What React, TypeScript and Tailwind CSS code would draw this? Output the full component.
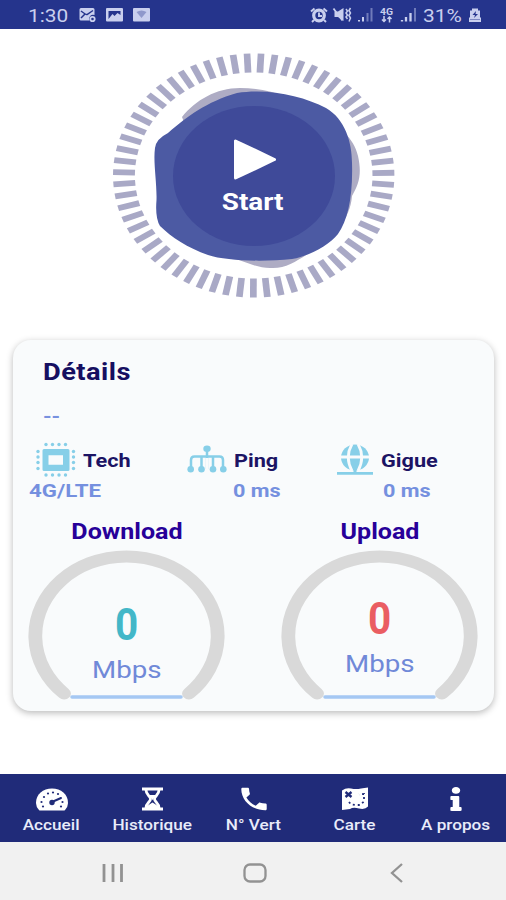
import clsx from "clsx";
import { FaInfo } from "react-icons/fa";
import { MdPhone } from "react-icons/md";

const TICKS = 63;

const StatusBar = () => (
  <div className="flex h-[29px] items-center justify-between bg-[#25348c] pl-7 pr-[25px] text-[#c9cfee]">
    <div className="flex items-center">
      <span className="w-[51px] pt-0.5 text-[18px] leading-none">
        <span className="inline-block origin-left scale-x-[1.16]">1:30</span>
      </span>
      <svg className="h-4 w-[72px]" viewBox="0 0 72 16">
        <path fill="currentColor" d="M2 1h12q1.500 0 1.500 1.500V8a4 4 0 0 0-5 5.500H2Q.5 13.500.5 12V2.500Q.5 1 2 1z" />
        <path d="M2 4q5 4 6 3.500l6-4M2 11l4-4" stroke="#25348c" strokeWidth="1.500" fill="none" />
        <circle cx="13.500" cy="12" r="2.200" stroke="currentColor" strokeWidth="1.800" fill="none" />
        <rect x="27" y="1" width="17" height="13.500" rx="1" fill="currentColor" />
        <path d="M29.500 12V4h12v4l-3-2-3 3-2-2z" fill="#25348c" />
        <rect x="54" y="1" width="17" height="13.500" rx="1" fill="currentColor" />
        <path d="M57.500 5q5-3 10 0l-5 6z" fill="#8f98cb" />
      </svg>
    </div>
    <div className="flex items-center">
      <svg className="h-4 w-[114px]" viewBox="0 0 114 16">
        <circle cx="10" cy="8.500" r="5.300" fill="none" stroke="currentColor" strokeWidth="3.200" />
        <path d="M10 5.500V9h3M2 4.500l3.500-3M18 4.500l-3.500-3M5 13l-2 2M15 13l2 2" fill="none" stroke="currentColor" strokeWidth="1.900" />
        <path d="M25.500 4.500h3.500l5.500-3.500v13l-5.500-4h-3.500z" fill="currentColor" />
        <path d="m24.500 1.500 9 12" stroke="currentColor" strokeWidth="1.800" />
        <path d="M37 2l1.500 2L37 6l1.500 2L37 10l1.500 2M41.500 1l-1.500 2.500L41.500 6 40 8.500l1.500 2.500-1.500 3.500" fill="none" stroke="currentColor" strokeWidth="1.500" />
        <path d="M50 13v1.500M54 10v4.500" stroke="currentColor" strokeWidth="2" />
        <path d="M58.500 6v8.500M62.500 1v13.500" stroke="#707bba" strokeWidth="2" />
        <text x="71" y="7.500" fontSize="8.500" fontWeight="700" fill="currentColor" textLength="13" lengthAdjust="spacingAndGlyphs">4G</text>
        <path d="M75 9v6M73 12.500l2 2 2-2M80.500 15.500v-6M78.500 12l2-2 2 2" fill="none" stroke="currentColor" strokeWidth="1.500" />
        <path d="M93 13v1.500M97 10v4.500M101.500 6v8.500" stroke="currentColor" strokeWidth="2.300" />
        <path d="M106 1v13.500" stroke="#707bba" strokeWidth="2" />
      </svg>
      <span className="w-[46px] pt-0.5 text-[18px] leading-none">
        <span className="inline-block origin-left scale-x-[1.160]">31%</span>
      </span>
      <svg className="h-4 w-3" viewBox="0 0 12 16">
        <path d="M3 1.500h6v2h2v7h1v4.500H0v-4.500h1v-7h2z" fill="currentColor" />
        <path d="M7 4 3.500 8H6l-1 3 4-4H6.500z" fill="#25348c" />
        <path d="M1 12.500h10" stroke="#7e88c2" />
      </svg>
    </div>
  </div>
);

const StartButton = () => (
  <button className="relative mx-auto block h-[252px] w-[290px]">
    <svg className="h-full w-full" viewBox="0 0 290 252">
      <g transform="translate(145.700 125.500) scale(1.153 1)">
        {Array.from({ length: TICKS }, (_, i) => (
          <rect
            key={i}
            x="-2.900"
            y="-122"
            width="5.800"
            height="19"
            fill="#a9a9c6"
            transform={`rotate(${3 + (i * 360) / TICKS})`}
          />
        ))}
      </g>
      <path
        d="M74 67C88 50 108 38 132 38C162 38 186 48 206 62C232 76 246 88 250 106C254 124 251 134 244 146C242 170 226 186 206 200C190 210 180 218 165 218C152 219 140 213 128 209Z"
        fill="#aeacc4"
      />
      <path
        d="M47 98Q48 89 60 83C80 66 98 52 129 43C160 38 195 46 218 58C237 69 244 92 244 113C245 146 240 170 230 184C221 195 202 206 184 209C155 212 118 211 100 205C80 198 63 187 52 176Q47 168 48.500 150C49 132 45 112 47 98Z"
        fill="#4c5aa3"
      />
      <ellipse cx="146" cy="126" rx="81" ry="70" fill="#3f4a99" />
      <path d="M127.500 91v37l39-18.500z" fill="#fff" stroke="#fff" strokeWidth="3" strokeLinejoin="round" />
    </svg>
    <span className="absolute inset-x-0 top-[138px] text-[24px] font-bold leading-7 text-white">
      <span className="inline-block scale-x-[1.16]">Start</span>
    </span>
  </button>
);

const ChipIcon = () => (
  <svg className="h-9 w-10" viewBox="0 0 40 36" fill="#87cfe8">
    <path fillRule="evenodd" d="M8 7h24q1.500 0 1.500 1.500v19q0 1.500-1.500 1.500H8q-1.500 0-1.500-1.500v-19Q6.500 7 8 7zm4.500 6.300v9.500h14.500v-9.500z" />
    {[10, 16.500, 23, 29.500].map((x) => (
      <g key={x}>
        <circle cx={x} cy="2.500" r="1.700" />
        <circle cx={x} cy="33" r="1.700" />
      </g>
    ))}
    {[9.500, 15, 20.500, 26.500].map((y) => (
      <g key={y}>
        <circle cx="2" cy={y} r="1.700" />
        <circle cx="37.500" cy={y} r="1.700" />
      </g>
    ))}
  </svg>
);

const TreeIcon = () => (
  <svg className="-mt-0.5 h-7 w-10" viewBox="0 0 40 28" fill="none" stroke="#87cfe8" strokeWidth="2.500">
    <path d="M20 3v21M4 24v-9q0-3.500 3.500-3.500h25q3.500 0 3.500 3.500v9M14.500 11.500v12M26 11.500v12" />
    <path d="M20 13v12" stroke="#f9fbfc" strokeWidth="3" />
    <g fill="#87cfe8" stroke="none">
      <ellipse cx="20" cy="3.800" rx="3.700" ry="3.200" />
      <circle cx="3.700" cy="24.300" r="3.300" />
      <circle cx="14.500" cy="24.300" r="3.300" />
      <circle cx="26" cy="24.300" r="3.300" />
      <circle cx="36.300" cy="24.300" r="3.300" />
    </g>
  </svg>
);

const GlobeIcon = () => (
  <svg className="h-8 w-9" viewBox="0 0 36 32" fill="#87cfe8">
    <ellipse cx="18" cy="13.500" rx="14" ry="13" />
    <path d="M3 13h30M15 0q-7.500 13 0 27M21 0q7.500 13 0 27" fill="none" stroke="#f9fbfc" strokeWidth="2.800" />
    <path d="M16.500 22h3v6h-3zM0 28h36v2.800H0z" />
  </svg>
);

const Gauge = ({ color, offset }: { color: string; offset: string }) => (
  <div className="relative h-[152px] w-[198px]">
    <svg className="h-full w-full" viewBox="0 0 198 152">
      <g transform="translate(98.500 86.500) scale(1.150 1)">
        <path d="M-54.300 57A79.300 79.300 0 1 1 54.300 57" fill="none" stroke="#d9d9d9" strokeWidth="12" strokeLinecap="round" />
      </g>
      <path d="M44 147h109" stroke="#a5c8f3" strokeWidth="3.500" strokeLinecap="round" />
    </svg>
    <div className={clsx("absolute inset-x-0 flex flex-col items-center", offset)}>
      <span className={clsx("scale-x-[0.92] text-[44px] font-bold leading-[52px]", color)}>0</span>
      <span className="mt-[3px] scale-x-[1.13] text-[24.500px] leading-8 text-[#7089d8]">Mbps</span>
    </div>
  </div>
);

const Label = ({ text }: { text: string }) => (
  <span className="inline-block origin-left scale-x-[1.13] pt-0.5 text-[19.200px] font-bold leading-6 text-[#1c1464]">
    {text}
  </span>
);

const Details = () => (
  <div className="ml-[13px] mr-3 mt-[38px] h-[371px] rounded-[18px] bg-[#f9fbfc] shadow-[0_2px_7px_rgba(0,0,0,0.28)]">
    <h2 className="pl-[30px] pt-[18px] text-[23.500px] font-bold leading-7 text-[#160f61]">
      <span className="inline-block origin-left scale-x-[1.16] tracking-[0.4px]">Détails</span>
    </h2>
    <div className="h-[54px] pl-[30px] pt-[21px] text-[19px] font-bold leading-5 text-[#7891df]">
      <span className="inline-block origin-left scale-x-[1.150]">--</span>
    </div>
    <div className="flex h-10 items-center pl-[23px]">
      <div className="flex w-[151px] items-center gap-[7px]">
        <ChipIcon />
        <Label text="Tech" />
      </div>
      <div className="flex w-[150px] items-center gap-[7px]">
        <TreeIcon />
        <Label text="Ping" />
      </div>
      <div className="flex items-center gap-2">
        <GlobeIcon />
        <Label text="Gigue" />
      </div>
    </div>
    <div className="flex h-6 text-[19px] font-bold leading-[22px] text-[#7590df]">
      <span className="w-[204px] pl-4">
        <span className="inline-block origin-left scale-x-[1.17]">4G/LTE</span>
      </span>
      <span className="w-[150px] pl-4">
        <span className="inline-block origin-left scale-x-[1.140]">0 ms</span>
      </span>
      <span className="pl-4">
        <span className="inline-block origin-left scale-x-[1.140]">0 ms</span>
      </span>
    </div>
    <div className="flex h-[46px] items-center justify-between px-[15px] pt-[9px] text-center text-[22px] font-bold text-[#270099]">
      <span className="w-[198px] scale-x-[1.14]">Download</span>
      <span className="w-[198px] scale-x-[1.14]">Upload</span>
    </div>
    <div className="flex justify-between px-[15px]">
      <Gauge color="text-[#43b7c8]" offset="top-[49px]" />
      <Gauge color="text-[#ea5d62]" offset="top-[43px]" />
    </div>
  </div>
);

const SpeedIcon = () => (
  <svg className="h-[23px] w-8" viewBox="0 0 32 23">
    <path d="M3 22Q0 19 0 15C0 6 7 .5 16 .5S32 6 32 15q0 4-3 7-.5.500-1 .500H4q-.5 0-1-.5z" fill="#fff" />
    <path d="m16 14 9-4" stroke="#202b79" strokeWidth="2" strokeLinecap="round" />
    <circle cx="16" cy="14.500" r="2.700" fill="#202b79" />
    <g fill="#202b79">
      <circle cx="5.500" cy="14" r="1.100" />
      <circle cx="7" cy="18.500" r="1.100" />
      <circle cx="8" cy="9" r="1.100" />
      <circle cx="12" cy="5.500" r="1.100" />
      <circle cx="17" cy="4.500" r="1.100" />
      <circle cx="22" cy="6" r="1.100" />
      <circle cx="26.500" cy="14" r="1.100" />
      <circle cx="25" cy="18.500" r="1.100" />
    </g>
  </svg>
);

const MapIcon = () => (
  <svg className="h-6 w-7" viewBox="0 0 28 24">
    <path d="M1 3.500q4-3 9-2t10 0l7-1v19q-3 3.500-9 2t-9 .5l-8 1z" fill="#fff" />
    <g fill="none" stroke="#202b79" strokeWidth="1.800">
      <path d="m4.500 5 6 5M10.500 5l-6 5" strokeWidth="2.300" />
      <path d="M8 15l2 2.500 4 .5h5l4-3.500V7l-5 .5" strokeDasharray="2 3" />
    </g>
  </svg>
);

const HourglassIcon = () => (
  <svg className="h-6 w-[21px]" viewBox="0 0 21 24" fill="none" stroke="#fff">
    <path d="M0 2h21M0 22h21" strokeWidth="3" />
    <path d="M4 3c0 5 4.500 6 4.500 9s-4.500 4-4.500 9M17 3c0 5-4.500 6-4.500 9s4.500 4 4.500 9" strokeWidth="2.800" />
    <path d="M7 8h7l-3.500 5zM5 19l5.500-3.500L16 19v3H5z" fill="#fff" stroke="none" />
  </svg>
);

const tabs = [
  { label: "Accueil", icon: <SpeedIcon /> },
  { label: "Historique", icon: <HourglassIcon /> },
  { label: "N° Vert", icon: <MdPhone className="h-[30px] w-[30px] scale-x-[1.13]" /> },
  { label: "Carte", icon: <MapIcon /> },
  { label: "A propos", icon: <FaInfo className="h-6 w-6 scale-x-[1.25]" /> },
];

const App = () => (
  <div className="flex h-[900px] w-[506px] flex-col overflow-hidden bg-white font-['Roboto',sans-serif]">
    <StatusBar />
    <main className="grow pt-[21px]">
      <StartButton />
      <Details />
    </main>
    <nav className="flex h-[68px] bg-[#202b79] pl-px text-white">
      {tabs.map((tab) => (
        <div key={tab.label} className="flex w-1/5 flex-col items-center pt-[9px]">
          <div className="flex h-8 items-center">{tab.icon}</div>
          <span className="scale-x-[1.130] whitespace-nowrap text-[15.200px] font-medium leading-5 text-[#e9ecfa]">
            {tab.label}
          </span>
        </div>
      ))}
    </nav>
    <div className="flex h-[58px] items-center justify-center gap-[118px] bg-[#f1f1f1] pl-[3px] pt-[3px]">
      <svg className="h-5 w-6" viewBox="0 0 24 20" stroke="#929292" strokeWidth="2.800">
        <path d="M3 1v18M12 1v18M20.500 1v18" />
      </svg>
      <svg className="h-5 w-6" viewBox="0 0 24 20" fill="none" stroke="#929292" strokeWidth="2.300">
        <rect x="1.500" y="1.500" width="21" height="17" rx="5.500" />
      </svg>
      <svg className="h-5 w-6" viewBox="0 0 24 20" fill="none" stroke="#929292" strokeWidth="2.300">
        <path d="M17 1 7 10l10 9" />
      </svg>
    </div>
  </div>
);

export default App;
